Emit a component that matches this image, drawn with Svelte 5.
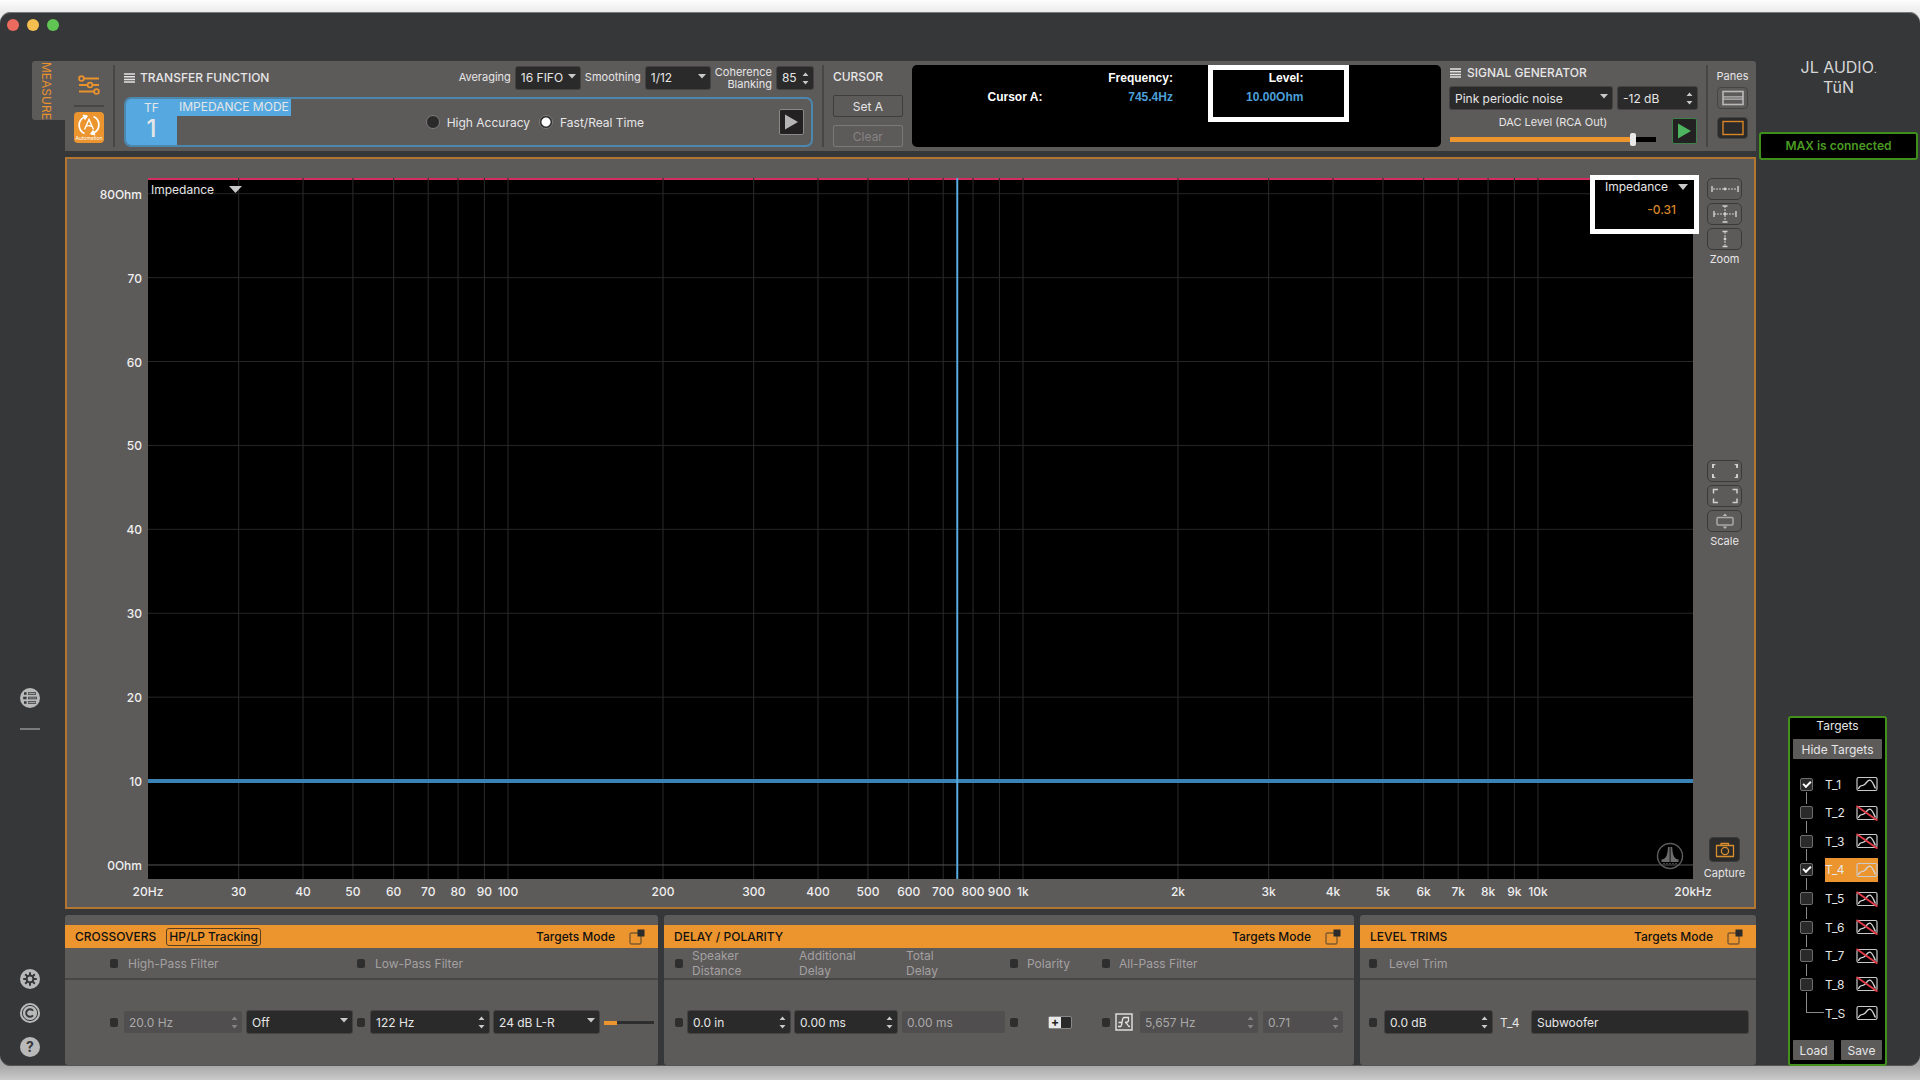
<script>
  let averaging = $state("16 FIFO");
  let smoothing = $state("1/12");
  let accuracy = $state("fast");
  let signal = $state("Pink periodic noise");
  let dacLevel = $state(90);
  let leftTrace = $state("Impedance");
  let rightTrace = $state("Impedance");

  let targets = $state([
    { name: "T_1", checked: true, muted: false },
    { name: "T_2", checked: false, muted: true },
    { name: "T_3", checked: false, muted: true },
    { name: "T_4", checked: true, muted: false },
    { name: "T_5", checked: false, muted: true },
    { name: "T_6", checked: false, muted: true },
    { name: "T_7", checked: false, muted: true },
    { name: "T_8", checked: false, muted: true },
  ]);
  let selected = $state("T_4");

  const freqs = [
    20, 30, 40, 50, 60, 70, 80, 90, 100, 200, 300, 400, 500, 600, 700, 800, 900,
    1000, 2000, 3000, 4000, 5000, 6000, 7000, 8000, 9000, 10000, 20000,
  ];
  const ohms = [80, 70, 60, 50, 40, 30, 20, 10, 0];

  // log scale, 20 Hz to 20 kHz
  function fx(f) {
    return (Math.log10(f / 20) / 3) * 100 + "%";
  }

  function oy(ohm) {
    return 98 - ohm * 1.197 + "%";
  }

  function freqLabel(f) {
    if (f === 20) return "20Hz";
    if (f === 20000) return "20kHz";
    return f >= 1000 ? f / 1000 + "k" : String(f);
  }

  function ohmLabel(o) {
    return o === 80 || o === 0 ? o + "Ohm" : String(o);
  }
</script>

{#snippet spin(id, label, value, disabled = false, arrows = true)}
  <div class="spin" class:disabled>
    <input {id} type="text" aria-label={label} {value} {disabled} />
    {#if arrows}
      <svg class="arrows" width="7" height="13" viewBox="0 0 7 13" aria-hidden="true">
        <path d="M0.5 4 L3.5 0.5 L6.5 4Z M0.5 9 L3.5 12.5 L6.5 9Z" />
      </svg>
    {/if}
  </div>
{/snippet}

{#snippet caret()}
  <svg class="caret" width="8" height="5" viewBox="0 0 8 5" aria-hidden="true"><path d="M0 0H8L4 4.5Z" /></svg>
{/snippet}

{#snippet bars()}
  <svg width="11" height="10" viewBox="0 0 11 10" aria-hidden="true">
    <path d="M0 1H11M0 3.7H11M0 6.4H11M0 9.1H11" stroke="#e4e4e4" stroke-width="1.5" />
  </svg>
{/snippet}

{#snippet popout()}
  <button class="popout" aria-label="Open in window">
    <svg width="16" height="16" viewBox="0 0 16 16">
      <rect x="1" y="4" width="11" height="11" rx="1.5" fill="none" stroke="#7d5a30" stroke-width="1.4" />
      <rect x="8.5" y="0.5" width="7" height="7" fill="#2b2b2b" />
    </svg>
  </button>
{/snippet}

{#snippet curveIcon(muted)}
  <svg width="22" height="16" viewBox="0 0 22 16" aria-hidden="true">
    <rect x="1" y="1.5" width="20" height="13" rx="1.5" fill="none" stroke="#c9c9c9" stroke-width="1.2" />
    <path d="M2.5 13C3 10 4.5 9.5 7 9.3C10 9 10.5 4.5 13.5 4.2C16.5 4 17.5 9 19.5 12.5" fill="none" stroke="#d4d4d4" stroke-width="1.3" />
    {#if muted}
      <path d="M0.5 1L21.5 15.5" stroke="#e23b48" stroke-width="2" />
    {/if}
  </svg>
{/snippet}

<div class="page">
  <div class="window">
    <div class="titlebar">
      <button class="light red" aria-label="Close"></button>
      <button class="light yellow" aria-label="Minimize"></button>
      <button class="light green" aria-label="Zoom window"></button>
    </div>

    <div class="body">
      <nav class="rail">
        <button class="tab">MEASURE</button>
        <div class="rail-mid">
          <button class="round" aria-label="List">
            <svg width="20" height="20" viewBox="0 0 20 20">
              <circle cx="10" cy="10" r="10" fill="#b9b9b9" />
              <path d="M8 5.5H16M8 10H17M8 14.5H16" stroke="#353739" stroke-width="2.6" />
              <path d="M8.5 5.5H15.5M8.5 10H16.5M8.5 14.5H15.5" stroke="#b9b9b9" stroke-width="0.8" />
              <path d="M4 4.3H6.6V6.7H4ZM3.2 8.8H6.6V11.2H3.2ZM4 13.3H6.6V15.7H4Z" fill="#353739" />
            </svg>
          </button>
          <hr />
        </div>
        <div class="rail-end">
          <button class="round" aria-label="Settings">
            <svg width="20" height="20" viewBox="0 0 20 20">
              <circle cx="10" cy="10" r="10" fill="#b9b9b9" />
              <g stroke="#353739" stroke-width="2">
                <path d="M10 3.2V16.8M3.2 10H16.8M5.2 5.2L14.8 14.8M14.8 5.2L5.2 14.8" />
              </g>
              <circle cx="10" cy="10" r="4.4" fill="#353739" />
              <circle cx="10" cy="10" r="2.4" fill="#b9b9b9" />
            </svg>
          </button>
          <button class="round" aria-label="Copyright">
            <svg width="20" height="20" viewBox="0 0 20 20" fill="none">
              <circle cx="10" cy="10" r="10" fill="#b9b9b9" />
              <circle cx="10" cy="10" r="7.6" stroke="#353739" stroke-width="1" />
              <path d="M13 7.7A3.8 3.8 0 1 0 13 12.3" stroke="#353739" stroke-width="1.9" />
            </svg>
          </button>
          <button class="round help">?</button>
        </div>
      </nav>

      <main>
        <header class="panel top">
          <div class="tools">
            <button class="plain" aria-label="Tuning controls">
              <svg width="22" height="20" viewBox="0 0 22 20" fill="none" stroke="#e8912d" stroke-width="1.8">
                <path d="M6 3.5H21M1 10H9M15 10H21M1 16.5H16" />
                <circle cx="3.5" cy="3.5" r="2.4" />
                <circle cx="12" cy="10" r="2.4" />
                <circle cx="18.5" cy="16.5" r="2.4" />
              </svg>
            </button>
            <hr />
            <button class="auto">
              <svg width="24" height="22" viewBox="0 0 24 22" fill="none" stroke="#fff" stroke-width="1.7">
                <path d="M7 3.3A9 9 0 0 0 7.5 19.5" />
                <path d="M16.5 2.5A9 9 0 0 1 17 18.7" />
                <path d="M6 1L10.5 2L8 5.5ZM18 21L13.5 20L16 16.5Z" fill="#fff" stroke-width="1" />
                <path d="M7.5 15.5L12 5.5L16.5 15.5M8.5 12.5C11 10.5 13 12 15.5 12.5" stroke-width="1.4" />
              </svg>
              <span>Automation</span>
            </button>
          </div>
          <div class="vline"></div>

          <section class="tf">
            <div class="tf-head">
              {@render bars()}
              <h2>TRANSFER FUNCTION</h2>
              <label class="small" for="averaging">Averaging</label>
              <div class="select w64">
                <select id="averaging" bind:value={averaging}><option>16 FIFO</option></select>
                {@render caret()}
              </div>
              <label class="small" for="smoothing">Smoothing</label>
              <div class="select w64">
                <select id="smoothing" bind:value={smoothing}><option>1/12</option></select>
                {@render caret()}
              </div>
              <label class="small two" for="coherence">Coherence<br />Blanking</label>
              <div class="w36">{@render spin("coherence", "Coherence Blanking", "85")}</div>
            </div>
            <div class="tf-box">
              <div class="tf-num"><span>TF</span><strong>1</strong></div>
              <span class="mode">IMPEDANCE MODE</span>
              <div class="radios">
                <label><input type="radio" name="accuracy" value="high" bind:group={accuracy} />High Accuracy</label>
                <label><input type="radio" name="accuracy" value="fast" bind:group={accuracy} />Fast/Real Time</label>
              </div>
              <button class="play" aria-label="Run measurement">
                <svg width="15" height="16" viewBox="0 0 15 16"><path d="M1 0.5L14 8L1 15.5Z" fill="#b5b5b5" /></svg>
              </button>
            </div>
          </section>
          <div class="vline"></div>

          <section class="cursor">
            <h2>CURSOR</h2>
            <button class="flat">Set A</button>
            <button class="flat off" disabled>Clear</button>
          </section>

          <div class="readout">
            <table>
              <tbody>
                <tr><td></td><th>Frequency:</th><th>Level:</th></tr>
                <tr><th>Cursor A:</th><td>745.4Hz</td><td>10.00Ohm</td></tr>
              </tbody>
            </table>
            <div class="frame level-frame"></div>
          </div>

          <section class="gen">
            <div class="gen-head">
              {@render bars()}
              <h2>SIGNAL GENERATOR</h2>
            </div>
            <div class="gen-row">
              <div class="select grow">
                <select aria-label="Signal" bind:value={signal}><option>Pink periodic noise</option></select>
                {@render caret()}
              </div>
              <div class="w79">{@render spin("gain", "Signal level", "-12 dB")}</div>
            </div>
            <div class="gen-row dac">
              <div class="dac-level">
                <label class="small" for="dac">DAC Level (RCA Out)</label>
                <input id="dac" type="range" min="0" max="100" bind:value={dacLevel} style="--level: {dacLevel}%" />
              </div>
              <button class="play go" aria-label="Start signal">
                <svg width="15" height="16" viewBox="0 0 15 16"><path d="M1 0.5L14 8L1 15.5Z" fill="#4fb45f" /></svg>
              </button>
            </div>
          </section>
          <div class="vline"></div>

          <section class="panes">
            <span class="small">Panes</span>
            <button class="pane" aria-label="Two panes">
              <svg width="22" height="16" viewBox="0 0 22 16" fill="none" stroke="#b9b9b9" stroke-width="1.6">
                <rect x="1" y="1.5" width="20" height="13" /><path d="M1 6.8H21M1 9.2H21" stroke-width="1.2" />
              </svg>
            </button>
            <button class="pane on" aria-label="One pane">
              <svg width="22" height="16" viewBox="0 0 22 16"><rect x="1" y="1.5" width="20" height="13" fill="none" stroke="#d98527" stroke-width="1.4" /></svg>
            </button>
          </section>
        </header>

        <section class="panel chart">
          <div class="plot">
            <svg class="grid" aria-label="Impedance graph">
              <line x1="0" x2="100%" y1="1" y2="1" stroke="#d62b63" stroke-width="2" />
              {#each freqs as f}
                {#if f > 20 && f < 20000}
                  <line x1={fx(f)} x2={fx(f)} y1="0" y2="100%" stroke="#2b2b2b" />
                {/if}
                <text x={fx(f)} y="100%" dy="17" text-anchor="middle">{freqLabel(f)}</text>
              {/each}
              {#each ohms as o}
                <line x1="0" x2="100%" y1={oy(o)} y2={oy(o)} stroke={o === 0 ? "#555" : "#262626"} />
                <text x="-6" y={oy(o)} dy="5" text-anchor="end">{ohmLabel(o)}</text>
              {/each}
              <line x1="0" x2="100%" y1={oy(10)} y2={oy(10)} stroke="#3a83b6" stroke-width="4" />
              <line x1={fx(745.4)} x2={fx(745.4)} y1="0" y2="100%" stroke="#58aadf" stroke-width="2" />
            </svg>
            <div class="trace left">
              <select aria-label="Left trace" bind:value={leftTrace}><option>Impedance</option></select>
              <svg width="13" height="7" viewBox="0 0 13 7" aria-hidden="true"><path d="M0 0H13L6.5 7Z" fill="#c9c9c9" /></svg>
            </div>
            <div class="frame trace-frame">
              <div class="trace right">
                <select aria-label="Right trace" bind:value={rightTrace}><option>Impedance</option></select>
                <svg width="10" height="6" viewBox="0 0 10 6" aria-hidden="true"><path d="M0 0H10L5 6Z" fill="#c9c9c9" /></svg>
              </div>
              <span class="value">-0.31</span>
            </div>
            <svg class="badge" width="28" height="28" viewBox="0 0 28 28" aria-hidden="true">
              <circle cx="14" cy="14" r="12.5" fill="none" stroke="#5d5d5d" stroke-width="1.4" />
              <path d="M12 5H13.7V20H5.5V17.5C9.5 17 11.5 14.5 12 5ZM14.5 5H16.2C16.7 14.5 18.7 17 22.5 17.5V20H14.5Z" fill="#6c6c6c" />
              <path d="M7 21.5H21" stroke="#444" stroke-dasharray="2 1" />
            </svg>
          </div>

          <aside class="side">
            <div class="group">
              <button class="key" aria-label="Zoom horizontal">
                <svg width="30" height="18" viewBox="0 0 30 18" stroke="#d0d0d0" fill="none">
                  <path d="M2 6V12M28 6V12" stroke-width="1.4" /><path d="M3 9H27" stroke-dasharray="2 1" /><circle cx="15" cy="9" r="1.4" fill="#d0d0d0" stroke="none" />
                </svg>
              </button>
              <button class="key" aria-label="Zoom both">
                <svg width="30" height="18" viewBox="0 0 30 18" stroke="#d0d0d0" fill="none">
                  <path d="M4 6V12M26 6V12M12.5 1H17.5M12.5 17H17.5" stroke-width="1.4" /><path d="M4 9H26M15 1V17" stroke-dasharray="2 1" /><circle cx="15" cy="9" r="1.4" fill="#d0d0d0" stroke="none" />
                </svg>
              </button>
              <button class="key" aria-label="Zoom vertical">
                <svg width="30" height="18" viewBox="0 0 30 18" stroke="#d0d0d0" fill="none">
                  <path d="M12.5 1.5H17.5M12.5 16.5H17.5" stroke-width="1.4" /><path d="M15 2V16" stroke-dasharray="2 1" /><circle cx="15" cy="9" r="1.4" fill="#d0d0d0" stroke="none" />
                </svg>
              </button>
              <span class="small">Zoom</span>
            </div>
            <div class="group scale">
              <button class="key" aria-label="Scale out">
                <svg width="30" height="18" viewBox="0 0 30 18" fill="#d0d0d0">
                  <path d="M2 2H6L4 3.5L3.8 6H2ZM28 2H24L26 3.5L26.2 6H28ZM2 16H6L4 14.5L3.8 12H2ZM28 16H24L26 14.5L26.2 12H28Z" />
                </svg>
              </button>
              <button class="key" aria-label="Scale to fit">
                <svg width="30" height="18" viewBox="0 0 30 18" stroke="#d0d0d0" stroke-width="1.5" fill="none">
                  <path d="M8 2.5H3.5V6.5M22.5 2.5H27V6.5M8 15.5H3.5V11.5M22.5 15.5H27V11.5" />
                </svg>
              </button>
              <button class="key" aria-label="Scale vertical">
                <svg width="30" height="18" viewBox="0 0 30 18">
                  <rect x="7" y="5.5" width="16" height="7.5" rx="1" fill="none" stroke="#a9a9a9" stroke-width="1.5" />
                  <path d="M12.8 4L15 1.5L17.2 4ZM12.8 14.5L15 17L17.2 14.5Z" fill="#b9b9b9" />
                </svg>
              </button>
              <span class="small">Scale</span>
            </div>
            <div class="group capture">
              <button class="camera" aria-label="Capture">
                <svg width="20" height="16" viewBox="0 0 20 16" fill="none" stroke="#d98f2e" stroke-width="1.3">
                  <path d="M6 3.5V1.5H13.5V3.5M1.5 3.5H18.5V14.5H1.5Z" stroke-linejoin="round" />
                  <circle cx="10" cy="9" r="3.6" />
                </svg>
              </button>
              <span class="small">Capture</span>
            </div>
          </aside>
        </section>

        <div class="bottom">
          <section class="panel">
            <div class="bar">
              <h2>CROSSOVERS</h2>
              <button class="tracking">HP/LP Tracking</button>
              <span class="targets-mode">Targets Mode</span>
              {@render popout()}
            </div>
            <div class="cols xo names">
              <i class="dot"></i><span class="span2">High-Pass Filter</span>
              <i class="dot"></i><span class="span3">Low-Pass Filter</span>
            </div>
            <div class="cols xo values">
              <i class="dot"></i>
              {@render spin("hp", "High-pass frequency", "20.0 Hz", true)}
              <div class="select">
                <select aria-label="High-pass slope"><option>Off</option></select>
                {@render caret()}
              </div>
              <i class="dot"></i>
              {@render spin("lp", "Low-pass frequency", "122 Hz")}
              <div class="select">
                <select aria-label="Low-pass slope"><option>24 dB L-R</option></select>
                {@render caret()}
              </div>
              <div class="meter"><div></div></div>
            </div>
          </section>

          <section class="panel">
            <div class="bar">
              <h2>DELAY / POLARITY</h2>
              <span class="targets-mode">Targets Mode</span>
              {@render popout()}
            </div>
            <div class="cols dp names">
              <i class="dot"></i><span>Speaker<br />Distance</span><span>Additional<br />Delay</span><span>Total<br />Delay</span>
              <i class="dot"></i><span>Polarity</span>
              <i class="dot"></i><span class="span3">All-Pass Filter</span>
            </div>
            <div class="cols dp values">
              <i class="dot"></i>
              {@render spin("distance", "Speaker distance", "0.0 in")}
              {@render spin("additional", "Additional delay", "0.00 ms")}
              {@render spin("total", "Total delay", "0.00 ms", true, false)}
              <i class="dot"></i>
              <button class="polarity" aria-label="Polarity"><span>+</span></button>
              <i class="dot"></i>
              <button class="plain" aria-label="All-pass type">
                <svg width="18" height="18" viewBox="0 0 18 18" fill="none" stroke="#e4e4e4" stroke-width="1.4">
                  <rect x="1" y="1" width="16" height="16" />
                  <path d="M3 13.5H5.5C7.5 13.5 6.5 4.5 9 4.5H13.5V7.5C13.5 9 12 9.5 10 9.5M3.5 9.5H6.5M10.5 9.5C12.5 9.5 12 13.5 15 13.5" stroke-width="1.3" />
                </svg>
              </button>
              {@render spin("apf", "All-pass frequency", "5,657 Hz", true)}
              {@render spin("apq", "All-pass Q", "0.71", true)}
            </div>
          </section>

          <section class="panel">
            <div class="bar">
              <h2>LEVEL TRIMS</h2>
              <span class="targets-mode">Targets Mode</span>
              {@render popout()}
            </div>
            <div class="cols lt names"><i class="dot"></i><span class="span3">Level Trim</span></div>
            <div class="cols lt values">
              <i class="dot"></i>
              {@render spin("trim", "Level trim", "0.0 dB")}
              <label for="tname">T_4</label>
              {@render spin("tname", "Target name", "Subwoofer", false, false)}
            </div>
          </section>
        </div>
      </main>

      <aside class="right-rail">
        <div class="logo">JL AUDIO<small>.</small></div>
        <div class="logo">TüN</div>
        <div class="status">MAX is connected</div>

        <section class="targets">
          <h3>Targets</h3>
          <button class="grey">Hide Targets</button>
          <ul>
            {#each targets as t}
              <li>
                <input type="checkbox" aria-label={"Enable " + t.name} bind:checked={t.checked} />
                <button class="target" class:active={selected === t.name} onclick={() => (selected = t.name)}>
                  <span>{t.name}</span>{@render curveIcon(t.muted)}
                </button>
              </li>
            {/each}
            <li class="sum">
              <i></i>
              <button class="target"><span>T_S</span>{@render curveIcon(false)}</button>
            </li>
          </ul>
          <div class="pair">
            <button class="grey">Load</button>
            <button class="grey">Save</button>
          </div>
        </section>
      </aside>
    </div>
  </div>
</div>

<style>
  :global(body) {
    margin: 0;
    font-family: Inter, "Liberation Sans", sans-serif;
    font-size: 12px;
    color: #e6e6e6;
  }

  * {
    box-sizing: border-box;
  }

  button, input, select {
    font: inherit;
    color: inherit;
    margin: 0;
  }

  button {
    padding: 0;
    border: none;
    background: none;
    cursor: pointer;
  }

  svg {
    display: block;
    flex-shrink: 0;
  }

  h2, h3 {
    margin: 0;
    font-size: 12px;
    line-height: 16px;
    font-weight: 500;
    white-space: nowrap;
  }

  .page {
    display: flex;
    min-height: 100vh;
    padding: 12px 0 14px;
    background: linear-gradient(#fdfdfd, #ececec 12px, #ececec 50%, #a9a9a9 calc(100% - 14px), #cacaca);
  }

  .window {
    flex: 1;
    min-width: 0;
    display: flex;
    flex-direction: column;
    background: #353739;
    border-radius: 11px;
    box-shadow: inset 0 1px #7a7a7a, inset 0 -1px #555;
  }

  .titlebar {
    display: flex;
    gap: 8px;
    height: 49px;
    padding: 7px;
  }

  .light {
    width: 12px;
    height: 12px;
    border-radius: 50%;
  }

  .red { background: #ec6a5e; }
  .yellow { background: #f4bf4f; }
  .green { background: #61c554; }

  .body {
    flex: 1;
    display: flex;
  }

  .rail {
    width: 65px;
    display: flex;
    flex-direction: column;
    align-items: flex-start;
    padding-bottom: 9px;
  }

  .tab {
    align-self: flex-end;
    width: 33px;
    height: 59px;
    padding-right: 5px;
    border-radius: 3px 0 0 3px;
    background: #5d5a5a;
    color: #e8912d;
    writing-mode: vertical-rl;
    line-height: 28px;
    text-align: center;
  }

  .rail-mid {
    margin: auto 20px 239px;
  }

  .rail hr {
    width: 20px;
    margin: 20px 0 0;
    border: none;
    border-top: 2px solid #7b7b7b;
  }

  .rail-end {
    display: flex;
    flex-direction: column;
    gap: 14px;
    margin-left: 20px;
  }

  .round {
    display: block;
    width: 20px;
    height: 20px;
  }

  .help {
    border-radius: 50%;
    background: #b9b9b9;
    color: #353739;
    font-size: 14px;
    font-weight: 700;
    line-height: 20px;
  }

  main {
    flex: 1;
    min-width: 0;
    display: flex;
    flex-direction: column;
    gap: 6px;
    padding-bottom: 1px;
  }

  .panel {
    background: #5d5a5a;
  }

  .top {
    display: flex;
    gap: 9px;
    padding: 4px 8px 4px 9px;
    height: 90px;
    border-radius: 0 3px 0 0;
  }

  .vline {
    width: 2px;
    flex-shrink: 0;
    background: #474545;
  }

  .tools {
    width: 30px;
    display: flex;
    flex-direction: column;
    align-items: center;
    padding-top: 10px;
  }

  .tools hr {
    width: 30px;
    margin: 10px 0 5px;
    border: none;
    border-top: 2px solid #474545;
  }

  .auto {
    width: 30px;
    height: 31px;
    display: flex;
    flex-direction: column;
    align-items: center;
    padding-top: 2px;
    border-radius: 4px;
    background: #ec942d;
    color: #fff;
  }

  .auto span {
    font-size: 5px;
    line-height: 5px;
  }

  .tf {
    flex: 690 1 0;
    min-width: 0;
  }

  .tf-head {
    display: flex;
    align-items: center;
    gap: 5px;
    height: 25px;
    margin-bottom: 7px;
  }

  .tf-head h2 {
    flex: 1;
  }

  .small {
    font-size: 11px;
    line-height: 13px;
    white-space: nowrap;
  }

  .two {
    text-align: right;
    line-height: 12px;
  }

  .w64 { width: 64px; }
  .w36 { width: 36px; }
  .w79 { width: 79px; }
  .grow { flex: 1; }

  .select, .spin {
    position: relative;
    height: 22px;
    border-radius: 2px;
    background: #2a2a2a;
    box-shadow: 0 0 0 1px #444242;
  }

  .select select, .spin input {
    display: block;
    width: 100%;
    height: 22px;
    padding: 0 0 0 5px;
    border: none;
    outline: none;
    background: transparent;
    appearance: none;
  }

  .select option, .trace option {
    background: #2a2a2a;
  }

  .caret, .arrows {
    position: absolute;
    right: 4px;
    fill: #c9c9c9;
    pointer-events: none;
  }

  .caret {
    top: 7px;
  }

  .arrows {
    top: 5px;
  }

  .disabled {
    background: #504e4e;
    box-shadow: none;
    color: #a9a9a9;
  }

  .disabled .arrows {
    fill: #858383;
  }

  .tf-box {
    display: flex;
    height: 50px;
    border: 2px solid #4c87ae;
    border-radius: 7px;
    overflow: hidden;
  }

  .tf-num {
    width: 51px;
    display: flex;
    flex-direction: column;
    align-items: center;
    padding-top: 2px;
    background: #55a9e0;
  }

  .tf-num span {
    line-height: 14px;
  }

  .tf-num strong {
    font-size: 24px;
    line-height: 28px;
    font-weight: 500;
  }

  .mode {
    height: 17px;
    padding: 0 2px;
    background: #55a9e0;
    line-height: 16px;
    white-space: nowrap;
  }

  .radios {
    flex: 1;
    display: flex;
    align-items: center;
    justify-content: center;
    gap: 9px;
  }

  .radios label {
    display: flex;
    align-items: center;
    gap: 7px;
  }

  .radios input {
    width: 14px;
    height: 14px;
    border: 1px solid #7c7a7a;
    border-radius: 50%;
    background: #2a2a2a;
    appearance: none;
  }

  .radios input:checked {
    background: radial-gradient(#fff 4px, #2a2a2a 5px);
  }

  .play {
    display: flex;
    align-items: center;
    justify-content: center;
    width: 25px;
    height: 26px;
    border: 1px solid #8a8888;
    border-radius: 2px;
    background: #242122;
  }

  .tf-box .play {
    align-self: center;
    margin-right: 7px;
  }

  .go {
    border-color: #3e7f4b;
  }

  .cursor {
    width: 70px;
    display: flex;
    flex-direction: column;
    gap: 8px;
  }

  .cursor h2 {
    margin: 4px 0 2px;
  }

  .flat {
    height: 22px;
    border: 1px solid #3f3d3d;
    border-radius: 2px;
  }

  .off {
    border-color: #7b7979;
    color: #858383;
  }

  .readout {
    position: relative;
    flex: 530 1 0;
    border-radius: 5px;
    background: #000;
  }

  .readout table {
    width: 74%;
    margin-top: 4px;
    border-collapse: collapse;
    table-layout: fixed;
    color: #4c9fd8;
    font-family: "Liberation Sans", Arial, sans-serif;
    font-weight: 700;
    text-align: right;
  }

  .readout td, .readout th {
    height: 19px;
    padding: 0;
    line-height: 19px;
    text-align: right;
  }

  .readout th {
    color: #fff;
  }

  .frame {
    position: absolute;
    border: 5px solid #fff;
  }

  .level-frame {
    left: 56%;
    top: 0;
    width: 141px;
    height: 57px;
  }

  .gen {
    width: 247px;
    flex-shrink: 0;
  }

  .gen-head {
    display: flex;
    align-items: center;
    gap: 6px;
    margin-bottom: 6px;
  }

  .gen-row {
    display: flex;
    gap: 6px;
  }

  .dac {
    justify-content: space-between;
    margin-top: 9px;
  }

  .dac-level {
    width: 206px;
    text-align: center;
  }

  .dac-level label {
    display: block;
    line-height: 8px;
  }

  .dac-level input {
    display: block;
    width: 100%;
    height: 14px;
    margin-top: 6px;
    appearance: none;
    background: linear-gradient(90deg, #ec942d var(--level), #000 var(--level)) center / 100% 5px no-repeat;
    border-radius: 3px;
  }

  .dac-level input::-webkit-slider-thumb {
    appearance: none;
    width: 6px;
    height: 13px;
    border-radius: 2px;
    background: #e8e8e8;
  }

  .panes {
    width: 31px;
    display: flex;
    flex-direction: column;
    align-items: center;
    gap: 8px;
    padding-top: 5px;
  }

  .pane {
    display: flex;
    align-items: center;
    justify-content: center;
    width: 31px;
    height: 22px;
    border: 1px solid #444;
    border-radius: 4px;
  }

  .panes .small {
    margin-bottom: -4px;
  }

  .on {
    background: #2a2a2a;
  }

  .chart {
    flex: 1;
    display: flex;
    min-height: 500px;
    padding: 19px 12px 28px 81px;
    border: 2px solid #b27630;
  }

  .plot {
    position: relative;
    flex: 1;
    min-width: 0;
    background: #000;
  }

  .grid {
    position: absolute;
    inset: 0;
    width: 100%;
    height: 100%;
    overflow: visible;
  }

  .grid text {
    fill: #efefef;
    font-size: 12px;
    font-weight: 500;
  }

  .trace {
    display: flex;
    align-items: center;
  }

  .trace select {
    padding: 0;
    border: none;
    background: transparent;
    appearance: none;
  }

  .left {
    position: absolute;
    left: 3px;
    top: 4px;
    gap: 14px;
  }

  .trace-frame {
    right: -6px;
    top: -3px;
    width: 109px;
    height: 59px;
    padding: 0 6px 0 10px;
    background: #000;
  }

  .right {
    justify-content: space-between;
    height: 13px;
  }

  .value {
    display: block;
    padding: 9px 12px 0 0;
    color: #d98527;
    font-weight: 500;
    text-align: right;
  }

  .badge {
    position: absolute;
    right: 9px;
    bottom: 9px;
  }

  .side {
    display: flex;
    flex-direction: column;
    width: 63px;
    margin-right: -14px;
  }

  .group {
    display: flex;
    flex-direction: column;
    align-items: center;
    gap: 3px;
  }

  .key {
    display: flex;
    align-items: center;
    justify-content: center;
    width: 35px;
    height: 22px;
    border: 1px solid #3b3a3a;
    border-radius: 5px;
  }

  .scale {
    margin-top: 194px;
  }

  .capture {
    margin-top: auto;
    gap: 5px;
    margin-bottom: -1px;
  }

  .camera {
    display: flex;
    align-items: center;
    justify-content: center;
    width: 31px;
    height: 25px;
    border-radius: 4px;
    background: #2a2a2a;
    border: 1px solid #3b3a3a;
  }

  .bottom {
    display: grid;
    grid-template-columns: 593fr 690fr 396fr;
    gap: 6px;
  }

  .bottom .panel {
    min-width: 0;
    height: 150px;
    padding-top: 10px;
    border-radius: 3px;
  }

  .bar {
    display: flex;
    align-items: center;
    height: 23px;
    padding: 0 13px 0 10px;
    background: #ec942d;
    color: #111;
    font-weight: 500;
  }

  .tracking {
    height: 18px;
    margin-left: 10px;
    padding: 0 2px;
    border: 1px solid #5a4020;
    border-radius: 3px;
    line-height: 14px;
  }

  .targets-mode {
    margin-left: auto;
  }

  .popout {
    margin-left: 14px;
  }

  .cols {
    display: grid;
    align-items: center;
    gap: 5px;
  }

  .xo {
    grid-template-columns: 9px 118px 105px 9px 118px 105px 1fr;
    padding: 0 4px 0 45px;
  }

  .dp {
    grid-template-columns: 8px 102px 102px 103px 8px 1fr 8px 20px 118px 80px;
    padding: 0 11px;
  }

  .lt {
    grid-template-columns: 8px 107px 24px 1fr;
    gap: 8px;
    padding: 0 8px 0 9px;
  }

  .names {
    height: 32px;
    border-bottom: 2px solid #474545;
    color: #a3a1a1;
    line-height: 15px;
  }

  .names span {
    padding-left: 4px;
  }

  .span2 { grid-column: span 2; }
  .span3 { grid-column: span 3; }

  .values {
    height: 84px;
  }

  .dot {
    width: 8px;
    height: 9px;
    border-radius: 2px;
    background: #2f2e2e;
  }

  .meter {
    height: 3px;
    background: #2f2e2e;
  }

  .meter div {
    width: 26%;
    height: 4px;
    background: #ec942d;
  }

  .polarity {
    justify-self: center;
    width: 24px;
    height: 13px;
    border: 1px solid #888;
    border-radius: 2px;
    background: #2a2a2a;
    text-align: left;
  }

  .polarity span {
    display: block;
    width: 12px;
    height: 11px;
    background: #e8e8e8;
    color: #222;
    font-weight: 700;
    line-height: 10px;
    text-align: center;
  }

  .right-rail {
    width: 164px;
    display: flex;
    flex-direction: column;
    align-items: center;
    padding: 0 2px 0 3px;
  }

  .logo {
    height: 20px;
    color: #d6d6d6;
    font-size: 16px;
    line-height: 12px;
  }

  .logo small {
    font-size: 9px;
  }

  .status {
    width: 100%;
    height: 28px;
    margin-top: 31px;
    border: 2px solid #3f8f1b;
    border-radius: 3px;
    background: #000;
    color: #4a9c22;
    font-weight: 600;
    line-height: 24px;
    text-align: center;
  }

  .targets {
    width: 99px;
    margin: auto 2px 0 0;
    padding: 0 3px 4px;
    border: 2px solid #43901d;
    border-radius: 3px;
    background: #000;
  }

  .targets h3 {
    margin-bottom: 5px;
    text-align: center;
    font-weight: 400;
  }

  .grey {
    width: 100%;
    height: 20px;
    background: #5d5a5a;
    border-radius: 1px;
  }

  .targets ul {
    display: flex;
    flex-direction: column;
    justify-content: space-between;
    height: 257px;
    margin: 11px 0 13px;
    padding: 0 4px 0 7px;
    list-style: none;
  }

  .targets li {
    position: relative;
    display: flex;
    align-items: center;
    justify-content: space-between;
    height: 28px;
  }

  .targets li input {
    width: 13px;
    height: 13px;
    border: 1px solid #6c6c6c;
    border-radius: 2px;
    background: #2a2a2a;
    appearance: none;
  }

  .targets li input:checked::after {
    content: "";
    display: block;
    width: 6px;
    height: 3px;
    margin: 2px 0 0 2px;
    border: solid #fff;
    border-width: 0 0 2px 2px;
    transform: rotate(-45deg);
  }

  .targets li:not(.sum)::after {
    content: "";
    position: absolute;
    left: 6px;
    top: 22px;
    height: 12px;
    border-left: 1px solid #8a8a8a;
  }

  .sum i {
    width: 18px;
    height: 15px;
    margin: -15px 0 0 6px;
    border: solid #8a8a8a;
    border-width: 0 0 1px 1px;
  }

  .target {
    display: flex;
    align-items: center;
    justify-content: space-between;
    width: 53px;
    height: 24px;
  }

  .active {
    background: #ec942d;
  }

  .pair {
    display: grid;
    grid-template-columns: 1fr 1fr;
    gap: 7px;
  }
</style>
